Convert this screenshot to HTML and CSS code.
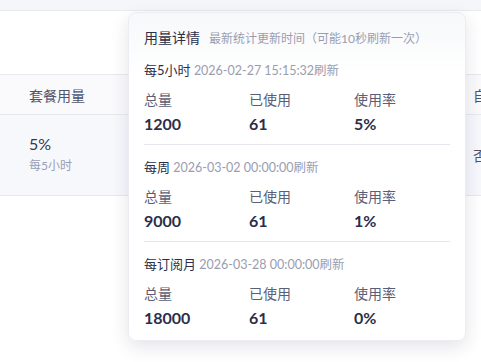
FILE: index.html
```html
<!DOCTYPE html>
<html>
<head>
  <meta name="viewport" content="width=device-width,initial-scale=1.0">
  <title>套餐用量</title>
  <link rel="stylesheet" href="styles.css">
</head>
<body>
  <div class="topbar"></div>

  <div class="table">
    <div class="row head">
      <div class="cell first">套餐用量</div>
      <div class="cell"></div>
      <div class="cell last">自动续费</div>
    </div>
    <div class="row body-row">
      <div class="cell first">
        <div class="pct">5%</div>
        <div class="sub">每5小时</div>
      </div>
      <div class="cell"></div>
      <div class="cell last">否</div>
    </div>
  </div>

  <div class="popover">
    <div class="pop-head">
      <span class="pop-title">用量详情</span>
      <span class="pop-note">最新统计更新时间（可能10秒刷新一次）</span>
    </div>

    <div class="section">
      <div class="sec-title">每5小时 <span class="date">2026-02-27 15:15:32刷新</span></div>
      <div class="stats">
        <div class="label">总量</div>
        <div class="label">已使用</div>
        <div class="label">使用率</div>
        <div class="value">1200</div>
        <div class="value">61</div>
        <div class="value">5%</div>
      </div>
    </div>

    <div class="section">
      <div class="sec-title">每周 <span class="date">2026-03-02 00:00:00刷新</span></div>
      <div class="stats">
        <div class="label">总量</div>
        <div class="label">已使用</div>
        <div class="label">使用率</div>
        <div class="value">9000</div>
        <div class="value">61</div>
        <div class="value">1%</div>
      </div>
    </div>

    <div class="section">
      <div class="sec-title">每订阅月 <span class="date">2026-03-28 00:00:00刷新</span></div>
      <div class="stats">
        <div class="label">总量</div>
        <div class="label">已使用</div>
        <div class="label">使用率</div>
        <div class="value">18000</div>
        <div class="value">61</div>
        <div class="value">0%</div>
      </div>
    </div>
  </div>
</body>
</html>
```

FILE: styles.css
```css
body {
  margin: 0;
  background: #fff;
  font-family: Lato, "Noto Sans CJK SC", sans-serif;
  color: #2d3048;
  overflow: hidden;
}

.topbar {
  height: 10px;
  background: #f5f6fa;
  border-bottom: 1px solid #e9eaf0;
}

.table {
  margin-top: 63px;
  border-top: 1px solid #e8e9ef;
  white-space: nowrap;
}

.row {
  display: grid;
  grid-template-columns: 220px 237px 1fr;
  border-bottom: 1px solid #e8e9ef;
}

.head {
  height: 39px;
  align-items: center;
  background: #fafafc;
  font-size: 14px;
  color: #50546c;
}

.body-row {
  height: 80px;
  align-items: center;
  background: #f7f8fc;
}

.cell.first {
  padding-left: 29px;
}

.cell.last {
  padding-left: 16px;
  font-size: 14px;
  color: #50546c;
}

.pct {
  font-size: 16px;
  height: 22px;
  line-height: 22px;
  color: #33364f;
}

.sub {
  font-size: 12px;
  height: 22px;
  line-height: 22px;
  color: #9a9db0;
}

/* 用量详情弹层 */
.popover {
  position: absolute;
  left: 128px;
  top: 12px;
  width: 338px;
  height: 329px;
  box-sizing: border-box;
  padding: 0 15px;
  border: 1px solid #ecedf2;
  border-radius: 8px;
  background: linear-gradient(#f7f8fa, #fff 64px);
  box-shadow: 0 6px 18px rgba(30, 35, 70, 0.12);
}

.pop-head {
  padding-top: 13px;
  height: 22px;
  line-height: 22px;
  white-space: nowrap;
}

.pop-title {
  font-size: 14px;
  color: #2d3048;
  margin-right: 5px;
}

.pop-note {
  font-size: 12px;
  color: #9a9db0;
}

.section {
  padding: 12px 0 8px;
  border-top: 1px solid #e6e7ee;
}

.pop-head + .section {
  border-top: none;
}

.sec-title {
  height: 20px;
  font-size: 13px;
  line-height: 20px;
  color: #2d3048;
  white-space: nowrap;
}

.date {
  font-size: 12.5px;
  color: #9a9db0;
}

.stats {
  display: grid;
  grid-template-columns: 105px 105px 1fr;
  grid-template-rows: 20px 24px;
  row-gap: 2px;
  margin-top: 10px;
}

.label {
  font-size: 14px;
  line-height: 20px;
  color: #5a5e76;
}

.value {
  font-size: 16px;
  line-height: 24px;
  font-weight: 700;
  color: #2b2e4a;
}
```
